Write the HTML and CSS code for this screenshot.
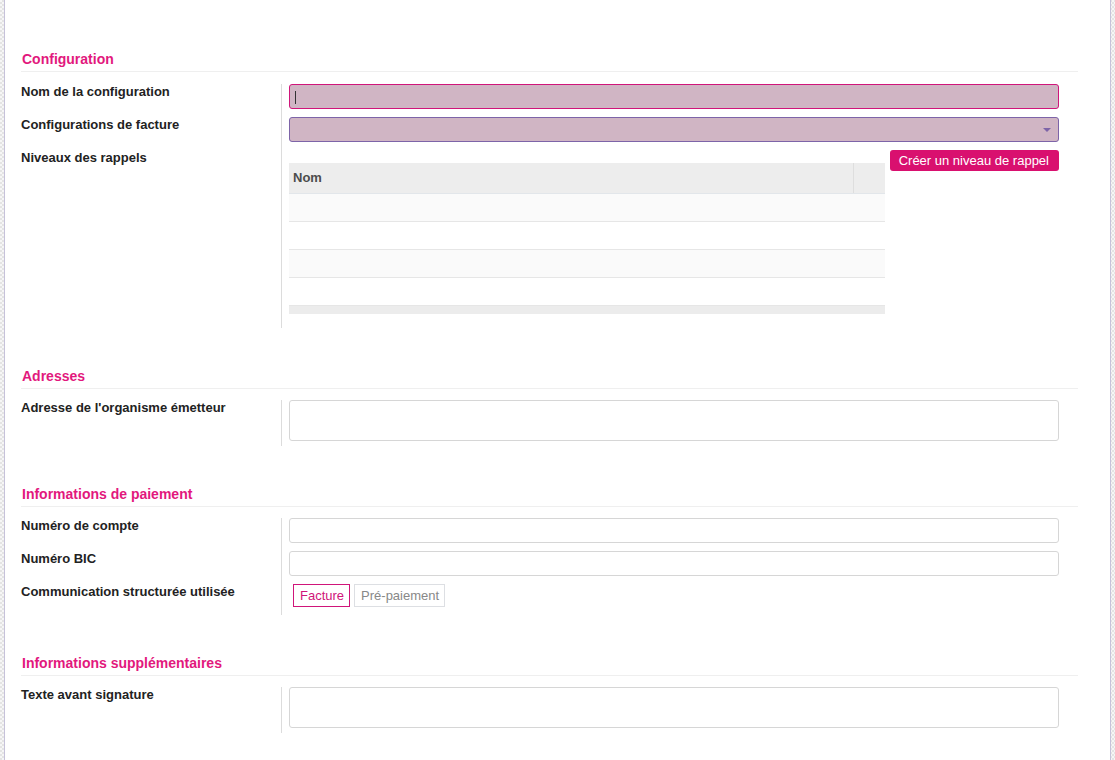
FILE: index.html
```html
<!DOCTYPE html>
<html lang="fr">
<head>
<meta charset="utf-8">
<title>Configuration</title>
<link rel="stylesheet" href="styles.css">
</head>
<body>
<div class="sheet">
  <h2 class="sec-title first">Configuration</h2>
  <div class="group">
    <div class="label">Nom de la configuration</div>
    <div class="field"><div class="input input-focus"><span class="caret"></span></div></div>
    <div class="label">Configurations de facture</div>
    <div class="field"><div class="input input-select"><span class="dropdown"></span></div></div>
    <div class="label">Niveaux des rappels</div>
    <div class="field field-o2m">
      <div class="table-wrap">
        <div class="t-head"><div class="t-col-name">Nom</div><div class="t-col-end"></div></div>
        <div class="t-row odd"></div>
        <div class="t-row"></div>
        <div class="t-row odd"></div>
        <div class="t-row"></div>
        <div class="t-foot"></div>
      </div>
      <button class="btn-primary">Créer un niveau de rappel</button>
    </div>
  </div>

  <h2 class="sec-title">Adresses</h2>
  <div class="group">
    <div class="label">Adresse de l'organisme émetteur</div>
    <div class="field last"><div class="input textarea"></div></div>
  </div>

  <h2 class="sec-title">Informations de paiement</h2>
  <div class="group">
    <div class="label">Numéro de compte</div>
    <div class="field"><div class="input"></div></div>
    <div class="label">Numéro BIC</div>
    <div class="field"><div class="input"></div></div>
    <div class="label">Communication structurée utilisée</div>
    <div class="field last-btn">
      <div class="radio-group">
        <span class="radio active">Facture</span>
        <span class="radio">Pré-paiement</span>
      </div>
    </div>
  </div>

  <h2 class="sec-title">Informations supplémentaires</h2>
  <div class="group">
    <div class="label">Texte avant signature</div>
    <div class="field last"><div class="input textarea"></div></div>
  </div>
</div>
</body>
</html>
```
FILE: styles.css
```css
html, body {
  margin: 0;
  padding: 0;
  height: 100%;
}
body {
  font-family: "Liberation Sans", Arial, sans-serif;
  font-size: 13px;
  color: #222;
  background-color: #fff;
  background-image: repeating-conic-gradient(#e4e4e4 0 25%, #f6f6f6 0 50%);
  background-size: 4px 4px;
  overflow: hidden;
}
.sheet {
  box-sizing: border-box;
  margin-left: 4px;
  width: 1107px;
  min-height: 760px;
  background: #fff;
  border-left: 1px solid #c6c2da;
  border-right: 1px solid #c6c2da;
  padding: 0 32px 20px 16px;
}
.sec-title {
  margin: 38px 0 11px;
  padding: 0 0 2px 1px;
  font-size: 14px;
  line-height: 20px;
  font-weight: bold;
  color: #e2187d;
  border-bottom: 1px solid #efefef;
}
.sec-title.first {
  margin-top: 0;
  margin-bottom: 12px;
  padding-top: 49px;
}
.group {
  display: grid;
  grid-template-columns: 260px 1fr;
  margin-right: 19px;
}
.label {
  font-weight: bold;
  color: #222;
  line-height: 15px;
  padding-top: 0;
}
.field {
  border-left: 1px solid #dcdcdc;
  padding: 0 0 8px 7px;
}
.field.last {
  padding-bottom: 5px;
}
.field.last-btn {
  padding-bottom: 8px;
}
.input {
  box-sizing: border-box;
  height: 25px;
  border: 1px solid #d6d6d6;
  border-radius: 3px;
  background: #fff;
  position: relative;
}
.input-focus {
  background: #d0b5c4;
  border-color: #d0157a;
}
.caret {
  position: absolute;
  left: 5px;
  top: 6px;
  width: 1px;
  height: 13px;
  background: #333;
}
.input-select {
  background: #d0b5c4;
  border-color: #7d64a8;
}
.dropdown {
  position: absolute;
  right: 7px;
  top: 10px;
  width: 0;
  height: 0;
  border-left: 4px solid transparent;
  border-right: 4px solid transparent;
  border-top: 4px solid #7d64a8;
}
.textarea {
  height: 41px;
}
.field-o2m {
  display: flex;
  align-items: flex-start;
  padding-bottom: 5px;
}
.table-wrap {
  flex: 1;
  margin-top: 13px;
  margin-bottom: 9px;
}
.t-head {
  display: flex;
  height: 31px;
  background: #ededed;
  border-bottom: 1px solid #e2e6ea;
  box-sizing: border-box;
}
.t-col-name {
  flex: 1;
  padding-left: 4px;
  line-height: 30px;
  font-weight: bold;
  color: #4c4c4c;
}
.t-col-end {
  width: 31px;
  border-left: 1px solid #dedede;
}
.t-row {
  height: 28px;
  box-sizing: border-box;
  border-bottom: 1px solid #e6e6e6;
  background: #fff;
}
.t-row.odd {
  background: #fafafa;
}
.t-foot {
  height: 8px;
  background: #ececec;
}
.btn-primary {
  margin-left: 5px;
  height: 21px;
  padding: 0 10px 0 9px;
  border: none;
  border-radius: 3px;
  background: #d9106f;
  color: #fff;
  font-family: inherit;
  font-size: 13px;
  line-height: 19px;
  cursor: pointer;
}
.radio-group {
  display: flex;
  gap: 4px;
  padding-left: 4px;
}
.radio {
  box-sizing: border-box;
  height: 23px;
  line-height: 21px;
  padding: 0 5px 0 6px;
  border: 1px solid #dddfe3;
  color: #888;
  font-size: 13px;
}
.radio.active {
  border-color: #d0157a;
  color: #d0157a;
}
```
